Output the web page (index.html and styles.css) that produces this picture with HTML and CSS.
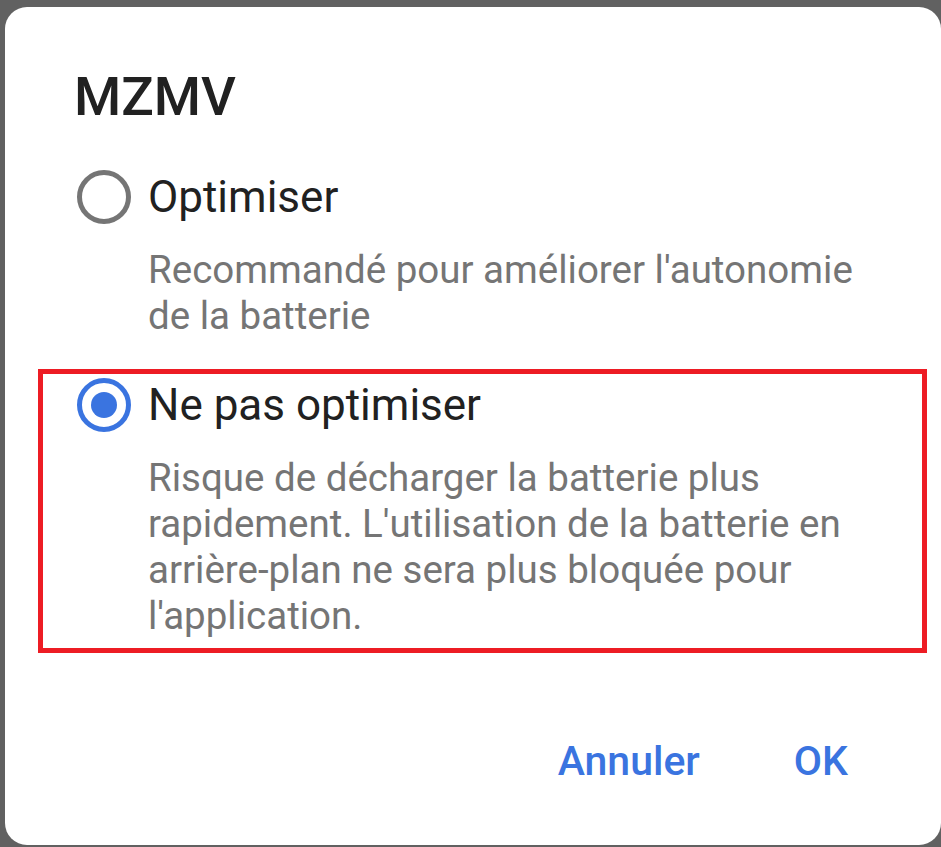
FILE: index.html
```html
<!DOCTYPE html>
<html lang="fr">
<head>
    <meta charset="UTF-8">
    <meta name="viewport" content="width=device-width, initial-scale=1.0">
    <title>MZMV</title>
    <link rel="stylesheet" href="styles.css">
</head>
<body>

<div class="dialog">
    <h1 class="title">MZMV</h1>

    <div class="option">
        <div class="option-head">
            <span class="radio"></span>
            <span class="label">Optimiser</span>
        </div>
        <p class="desc">Recommandé pour améliorer l'autonomie de la batterie</p>
    </div>

    <div class="option selected highlight">
        <div class="option-head">
            <span class="radio"></span>
            <span class="label">Ne pas optimiser</span>
        </div>
        <p class="desc">Risque de décharger la batterie plus rapidement. L'utilisation de la batterie en arrière-plan ne sera plus bloquée pour l'application.</p>
    </div>

    <div class="actions">
        <button class="btn">Annuler</button>
        <button class="btn">OK</button>
    </div>
</div>

</body>
</html>
```

FILE: styles.css
```css
body {
    margin: 0;
    background-color: #616161; /* dimmed screen behind the dialog */
    font-family: Roboto, "Liberation Sans", sans-serif;
    overflow: hidden;
}
.dialog {
    width: 936px;
    height: 838px;
    margin: 7px 0 0 5px;
    box-sizing: border-box;
    background-color: #fff;
    border-radius: 22px;
    padding: 58px 0 0 33px;
}
.title {
    margin: 0 0 0 36px;
    font-size: 54px;
    font-weight: 500;
    line-height: 64px;
    color: #212121;
}
.option {
    width: 889px;
    box-sizing: border-box;
    border: 5px solid transparent;
    padding: 4px 0 9px 34px;
    margin-top: 32px;
}
.highlight {
    border-color: #ed1c24; /* annotation box */
    margin-top: 16px;
}
.option-head {
    display: flex;
    align-items: center;
    gap: 17px;
}
.radio {
    width: 54px;
    height: 54px;
    box-sizing: border-box;
    border: 5px solid #757575;
    border-radius: 50%;
    display: flex;
    align-items: center;
    justify-content: center;
}
.selected .radio {
    border-color: #3a74e0;
}
.selected .radio::after {
    content: "";
    width: 26px;
    height: 26px;
    border-radius: 50%;
    background-color: #3a74e0;
}
.label {
    font-size: 44px;
    color: #212121;
}
.desc {
    margin: 23px 0 0 71px;
    width: 730px;
    font-size: 38.5px;
    line-height: 46px;
    color: #757575;
}
.actions {
    display: flex;
    justify-content: flex-end;
    gap: 94px;
    padding: 84px 93px 0 0;
}
.btn {
    border: none;
    background: none;
    padding: 0;
    font-family: inherit;
    font-size: 41px;
    font-weight: 500;
    color: #3a74e0;
}
```
